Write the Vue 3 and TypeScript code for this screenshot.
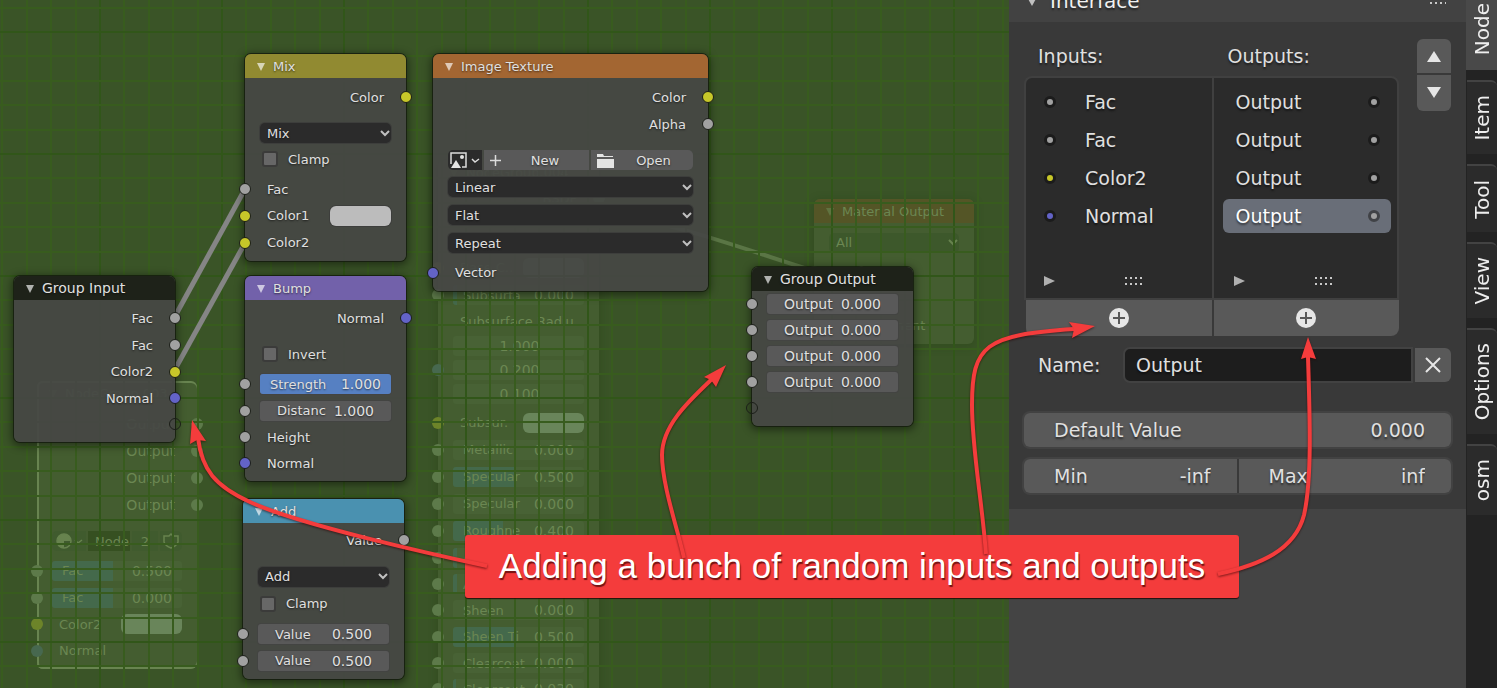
<script setup lang="ts">
import { ref } from 'vue'

type Kind = 'gap' | 'out' | 'in' | 'field' | 'select' | 'check' | 'swatch' | 'image' | 'group'

interface Row {
  kind: Kind
  h: number
  label?: string
  value?: string
  socket?: string
  fill?: number
  tight?: boolean
}

interface GraphNode {
  id: string
  title: string
  theme: string
  x: number
  y: number
  w: number
  rows: Row[]
}

const gap = (h: number): Row => ({ kind: 'gap', h })
const out = (label: string, socket: string, h: number): Row => ({ kind: 'out', label, socket, h })
const inp = (label: string, socket: string, h: number): Row => ({ kind: 'in', label, socket, h })
const pick = (label: string, h: number): Row => ({ kind: 'select', label, h })
const check = (label: string, h: number): Row => ({ kind: 'check', label, h })
const swatch = (label: string, h: number): Row => ({ kind: 'swatch', label, socket: 'yellow', h })
const field = (label: string, value: string, h: number, fill = 0, socket = 'gray', tight = false): Row =>
  ({ kind: 'field', label, value, h, fill, socket, tight })

const ghosts: GraphNode[] = [
  {
    id: 'ng', title: 'NodeGroup.003', theme: 'outlined', x: 37, y: 381, w: 160,
    rows: [
      gap(6), out('Output', 'gray', 26), out('Output', 'gray', 27), out('Output', 'gray', 27), out('Output', 'gray', 27),
      gap(10), { kind: 'group', h: 26 }, gap(3),
      field('Fac', '0.500', 27, 47, 'gray', true), field('Fac', '0.000', 27, 47, 'gray', true),
      swatch('Color2', 26), inp('Normal', 'blue', 27),
    ],
  },
  {
    id: 'bsdf', title: 'NodeGroup.004', theme: 'plain', x: 438, y: 160, w: 161,
    rows: [
      out('BSDF', 'green', 28), gap(42), swatch('Base C..', 27), field('Subsurfa', '0.000', 28, 3, 'gray', true),
      inp('Subsurface Radiu...', '', 25), field('', '1.000', 24, 0, ''), field('', '0.200', 24, 0, 'blue'),
      field('', '0.100', 24, 0, ''), gap(3), swatch('Subsur.', 27), field('Metallic', '0.000', 27, 0, 'gray', true),
      field('Specular', '0.500', 27, 47, 'gray', true), field('Specular', '0.000', 27, 0, 'gray', true),
      field('Roughne', '0.400', 27, 38, 'gray', true), field('Anisotro', '0.000', 27, 3, 'gray', true),
      field('Anisotro', '0.000', 26, 3, 'gray', true), field('Sheen', '0.000', 26, 0, 'gray', true),
      field('Sheen Ti', '0.500', 27, 47, 'gray', true), field('Clearcoat', '0.000', 26, 0, 'gray', true),
      field('Clearcoat', '0.030', 26, 2, 'gray', true), gap(20),
    ],
  },
  {
    id: 'mat', title: 'Material Output', theme: 'rust', x: 814, y: 199, w: 160,
    rows: [gap(6), pick('All', 27), gap(2), inp('Surface', 'green', 27), inp('Volume', 'green', 27), inp('Displacement', 'blue', 27)],
  },
]

const nodes: GraphNode[] = [
  {
    id: 'mix', title: 'Mix', theme: 'olive', x: 245, y: 54, w: 161,
    rows: [gap(4), out('Color', 'yellow', 30), gap(8), pick('Mix', 26), check('Clamp', 26), gap(4),
      inp('Fac', 'gray', 26), swatch('Color1', 27), inp('Color2', 'yellow', 27)],
  },
  {
    id: 'tex', title: 'Image Texture', theme: 'orange', x: 433, y: 54, w: 275,
    rows: [gap(4), out('Color', 'yellow', 30), out('Alpha', 'gray', 24), gap(11), { kind: 'image', h: 26 },
      pick('Linear', 28), pick('Flat', 28), pick('Repeat', 28), gap(2), inp('Vector', 'blue', 27)],
  },
  {
    id: 'gin', title: 'Group Input', theme: 'dark', x: 14, y: 276, w: 161,
    rows: [gap(4), out('Fac', 'gray', 28), out('Fac', 'gray', 26), out('Color2', 'yellow', 27), out('Normal', 'blue', 26), out('', 'empty', 26)],
  },
  {
    id: 'bump', title: 'Bump', theme: 'violet', x: 245, y: 276, w: 161,
    rows: [gap(4), out('Normal', 'blue', 28), gap(9), check('Invert', 26), gap(4),
      field('Strength', '1.000', 26, 100, 'gray', true), field('Distanc', '1.000', 27), inp('Height', 'gray', 26), inp('Normal', 'blue', 26)],
  },
  {
    id: 'add', title: 'Add', theme: 'cyan', x: 243, y: 499, w: 161,
    rows: [gap(4), out('Value', 'gray', 26), gap(10), pick('Add', 27), check('Clamp', 27), gap(4),
      field('Value', '0.500', 26), field('Value', '0.500', 27)],
  },
  {
    id: 'gout', title: 'Group Output', theme: 'dark', x: 752, y: 267, w: 161,
    rows: [field('Output', '0.000', 26), field('Output', '0.000', 26), field('Output', '0.000', 26), field('Output', '0.000', 26), inp('', 'empty', 26)],
  },
]

const layers = [
  { name: 'ghost', items: ghosts },
  { name: 'live', items: nodes },
]

const columns = Array.from({ length: 160 }, (_, i) => ({ p: Math.round(-22 + i * 24.4), major: i % 5 === 0 }))
const lines = Array.from({ length: 90 }, (_, i) => ({ p: Math.round(-90 + i * 24.4), major: i % 5 === 0 }))

const inputs = [
  { name: 'Fac', socket: 'gray' },
  { name: 'Fac', socket: 'gray' },
  { name: 'Color2', socket: 'yellow' },
  { name: 'Normal', socket: 'blue' },
]
const outputs = ['Output', 'Output', 'Output', 'Output']
const selected = ref(3)
const name = ref('Output')
const tabs = [
  { label: 'Node', h: 81 },
  { label: 'Item', h: 74 },
  { label: 'Tool', h: 68 },
  { label: 'View', h: 76 },
  { label: 'Options', h: 106 },
  { label: 'osm', h: 71 },
]
const arrows = [
  { line: 'M487 566C440 556 300 525 250 502C215 486 202 470 198 438', head: '192,420 190,444 197,440 206,441' },
  { line: 'M684 558C678 530 662 485 662 455C662 425 690 400 712 379', head: '726,365 704,377 711,380 716,387' },
  { line: 'M986 554C982 500 972 450 972 405C972 345 985 335 1074 329', head: '1095,326 1069,322 1074,329 1072,338' },
  { line: 'M1218 574C1260 565 1295 550 1304 515C1312 480 1310 420 1308 357', head: '1308,337 1301,359 1308,357 1316,359' },
]
</script>

<template>
  <div class="window">
    <main class="editor">
      <div v-for="layer in layers" :key="layer.name" class="layer" :class="layer.name">
        <svg v-if="layer.name === 'ghost'" class="wires">
          <path class="faint" d="M600 212C680 224 740 248 814 271" />
        </svg>
        <template v-else>
          <svg class="wires grid" shape-rendering="crispEdges">
            <line v-for="(c, i) in columns" :key="'c' + i" :x1="c.p" y1="0" :x2="c.p" y2="100%" :class="{ major: c.major }" />
            <line v-for="(l, i) in lines" :key="'l' + i" x1="0" :y1="l.p" x2="100%" :y2="l.p" :class="{ major: l.major }" />
          </svg>
          <svg class="wires">
            <path class="wire" d="M174 318L245 189" />
            <path class="wire" d="M174 371L245 243" />
          </svg>
        </template>

        <section
          v-for="n in layer.items"
          :key="n.id"
          class="node"
          :class="n.theme"
          :style="{ left: n.x + 'px', top: n.y + 'px', width: n.w + 'px' }"
        >
          <header class="node-head">
            <svg width="9" height="9" viewBox="0 0 9 9"><path d="M0 0H8L4 8Z" /></svg>
            <span>{{ n.title }}</span>
          </header>
          <div v-for="(r, i) in n.rows" :key="i" class="row" :class="'is-' + r.kind" :style="{ height: r.h + 'px' }">
            <i v-if="r.socket" class="socket" :class="r.socket"></i>
            <span v-if="r.kind === 'out' || r.kind === 'in'" :class="{ wide: r.label === 'Output' }">{{ r.label }}</span>

            <div v-else-if="r.kind === 'select'" class="pick">
              <select :aria-label="n.title + ' ' + r.label"><option>{{ r.label }}</option></select>
              <svg width="10" height="7" viewBox="0 0 10 7"><path d="M1 1L5 5L9 1" /></svg>
            </div>

            <label v-else-if="r.kind === 'check'"><input type="checkbox" />{{ r.label }}</label>

            <template v-else-if="r.kind === 'swatch'">
              <span>{{ r.label }}</span><button class="color" :aria-label="r.label"></button>
            </template>

            <label v-else-if="r.kind === 'field'" class="number" :class="{ tight: r.tight, sole: !r.label }">
              <i v-if="r.fill" class="fill" :style="{ width: r.fill + '%' }"></i>
              <span v-if="r.label" :class="{ wide: r.label === 'Output' }">{{ r.label }}</span>
              <input type="text" :value="r.value" :aria-label="r.label || n.title" />
            </label>

            <div v-else-if="r.kind === 'image'" class="bar">
              <button class="browse" aria-label="Browse image">
                <svg width="30" height="18" viewBox="0 0 30 18">
                  <path class="stroke" d="M12 16H16V2H1V13" />
                  <path class="solid" d="M1 17L6 9L11 17Z" /><circle class="solid" cx="12" cy="6" r="2" />
                  <path class="stroke" d="M22 8L25 11L29 8" />
                </svg>
              </button>
              <button>
                <svg width="11" height="11" viewBox="0 0 11 11"><path class="stroke" d="M5.5 0V11M0 5.5H11" /></svg><span>New</span>
              </button>
              <button>
                <svg width="17" height="15" viewBox="0 0 17 15"><path class="solid" d="M0 1H6L7 3H16V4H0ZM0 6H17V15H0Z" /></svg><span>Open</span>
              </button>
            </div>

            <div v-else-if="r.kind === 'group'" class="bar data">
              <button aria-label="Browse node groups">
                <svg width="30" height="18" viewBox="0 0 30 18">
                  <circle class="stroke" cx="10" cy="9" r="7" /><path class="solid" d="M10 2A7 7 0 0 0 10 16V9H17A7 7 0 0 0 10 2Z" />
                  <path class="stroke" d="M21 8L24 11L28 8" />
                </svg>
              </button>
              <input type="text" value="Node" aria-label="Group name" />
              <button>2</button>
              <button aria-label="Fake user">
                <svg width="16" height="16" viewBox="0 0 16 16"><path class="stroke" d="M8 1L10 3H15V9C14 12 11 14 8 15C5 14 2 12 1 9V3H6Z" /></svg>
              </button>
            </div>
          </div>
        </section>
      </div>
    </main>

    <aside class="sidebar">
      <section class="panel">
        <header class="panel-head">
          <svg width="10" height="9" viewBox="0 0 10 9"><path d="M0 0H10L5 9Z" /></svg>
          <h2>Interface</h2>
          <svg class="grip" width="16" height="6" viewBox="0 0 16 6"><path d="M0 1H16M0 5H16" /></svg>
        </header>
        <div class="panel-body">
          <div class="lists">
            <div class="list">
              <h3>Inputs:</h3>
              <div class="box">
                <ul>
                  <li v-for="(s, i) in inputs" :key="i">
                    <button><i class="dot" :class="s.socket"></i><span>{{ s.name }}</span></button>
                  </li>
                </ul>
                <div class="foot">
                  <svg width="11" height="10" viewBox="0 0 11 10"><path d="M0 0L11 5L0 10Z" /></svg>
                  <svg class="grip" width="19" height="8" viewBox="0 0 19 8"><path d="M0 1H19M0 7H19" /></svg>
                </div>
              </div>
              <button class="plus" aria-label="Add input">
                <svg width="20" height="20" viewBox="0 0 20 20"><circle cx="10" cy="10" r="10" /><path d="M10 4V16M4 10H16" /></svg>
              </button>
            </div>
            <div class="list right">
              <h3>Outputs:</h3>
              <div class="box">
                <ul>
                  <li v-for="(o, i) in outputs" :key="i">
                    <button :class="{ active: selected === i }" @click="selected = i"><span>{{ o }}</span><i class="dot gray"></i></button>
                  </li>
                </ul>
                <div class="foot">
                  <svg width="11" height="10" viewBox="0 0 11 10"><path d="M0 0L11 5L0 10Z" /></svg>
                  <svg class="grip" width="19" height="8" viewBox="0 0 19 8"><path d="M0 1H19M0 7H19" /></svg>
                </div>
              </div>
              <button class="plus" aria-label="Add output">
                <svg width="20" height="20" viewBox="0 0 20 20"><circle cx="10" cy="10" r="10" /><path d="M10 4V16M4 10H16" /></svg>
              </button>
            </div>
            <div class="move">
              <button aria-label="Move up"><svg width="16" height="12" viewBox="0 0 16 12"><path d="M8 1L15 12H1Z" /></svg></button>
              <button aria-label="Move down"><svg width="16" height="12" viewBox="0 0 16 12"><path d="M1 0H15L8 11Z" /></svg></button>
            </div>
          </div>

          <div class="name">
            <label for="socket-name">Name:</label>
            <input id="socket-name" v-model="name" type="text" />
            <button aria-label="Remove"><svg width="16" height="16" viewBox="0 0 16 16"><path d="M1 1L15 15M15 1L1 15" /></svg></button>
          </div>
          <div class="numbers">
            <label>Default Value<input type="text" value="0.000" /></label>
          </div>
          <div class="numbers">
            <label>Min<input type="text" value="-inf" /></label>
            <label>Max<input type="text" value="inf" /></label>
          </div>
        </div>
      </section>
      <nav class="tabs">
        <button v-for="(t, i) in tabs" :key="t.label" :class="{ current: i === 0 }" :style="{ height: t.h + 'px' }">
          <span>{{ t.label }}</span>
        </button>
      </nav>
    </aside>

    <p class="callout">Adding a bunch of random inputs and outputs</p>
    <svg class="arrows">
      <g v-for="(a, i) in arrows" :key="i">
        <path :d="a.line" /><polygon :points="a.head" />
      </g>
    </svg>
  </div>
</template>

<style>
body { margin: 0; background: #3a5427; }
</style>

<style scoped>
* { box-sizing: border-box; }
.window {
  position: relative; display: flex; height: 100vh; overflow: hidden;
  font-family: "DejaVu Sans", sans-serif; font-size: 13px; color: #e0e0e0;
}
button, input, select { font: inherit; color: inherit; border: 0; margin: 0; padding: 0; background: none; min-width: 0; text-shadow: inherit; }
button { display: flex; align-items: center; justify-content: center; }
h2, h3, ul, p { margin: 0; padding: 0; font-weight: 400; list-style: none; }

.editor { position: relative; flex: 1; min-width: 0; overflow: hidden; background: #3a5427; }
.layer { position: absolute; inset: 0; }
.wires { position: absolute; inset: 0; width: 100%; height: 100%; fill: none; }
.grid line { stroke: #385c1e; stroke-width: 2; }
.grid line.major { stroke: #315619; }
.wire { stroke: #858585; stroke-width: 5; }
.faint { stroke: #5a7545; stroke-width: 4; }

.node {
  position: absolute; padding-bottom: 5px; border-radius: 6px; background: rgba(70, 71, 69, 0.93);
  box-shadow: 0 0 0 1px rgba(20, 28, 14, 0.8), 0 2px 8px 2px rgba(0, 0, 0, 0.45); text-shadow: 0 1px 2px rgba(0, 0, 0, 0.6);
}
.node-head { display: flex; align-items: center; gap: 7px; height: 24px; padding-left: 12px; border-radius: 6px 6px 0 0; white-space: nowrap; }
.node-head svg { fill: #ffffff; opacity: 0.65; margin-top: 3px; }
.olive .node-head { background: #918a31; }
.orange .node-head { background: #a36632; }
.violet .node-head { background: #7261aa; }
.cyan .node-head { background: #4a91b0; }
.dark .node-head { background: #1e2219; font-size: 14px; }
.row { position: relative; display: flex; align-items: center; padding: 0 15px; white-space: nowrap; }
.is-out { justify-content: flex-end; padding-right: 22px; }
.is-in, .is-swatch { padding-left: 22px; }
.is-swatch { justify-content: space-between; }
.wide { font-size: 14px; }
.socket { position: absolute; left: -6px; top: calc(50% - 6px); width: 12px; height: 12px; border: 1px solid #1b1e18; border-radius: 50%; }
.is-out .socket { left: auto; right: -6px; }
.gray { background: #a1a1a1; }
.yellow { background: #c7c729; }
.blue { background: #6363c7; }
.green { background: #63c763; }
.pick { display: grid; flex: 1; align-items: center; }
.pick select { grid-area: 1 / 1; appearance: none; height: 20px; padding: 0 7px; border-radius: 5px; background: #2b2b2b; box-shadow: 0 0 0 1px #3d3e3c; }
.pick svg { grid-area: 1 / 1; justify-self: end; margin-right: 1px; fill: none; stroke: #c0c0c0; stroke-width: 2; pointer-events: none; }
.is-check label { display: flex; align-items: center; gap: 10px; margin-left: 2px; }
.is-check input { appearance: none; width: 16px; height: 16px; border: 2px solid #3b3b3a; border-radius: 3px; background: #676767; }
.color { width: 61px; height: 20px; border-radius: 6px; background: #bcbcbc; box-shadow: 0 0 0 1px #3d3e3c; }
.number {
  position: relative; display: flex; flex: 1; align-items: center; justify-content: space-between; min-width: 0; height: 20px;
  padding: 0 17px; border-radius: 3px; background: #595959; box-shadow: 0 0 0 1px #434442; overflow: hidden;
}
.number.tight { padding: 0 10px; }
.number.sole { justify-content: center; }
.number span, .number input { position: relative; }
.number input { width: 42px; font-size: 14px; text-align: right; }
.fill { position: absolute; left: 0; top: 0; bottom: 0; background: #5680c2; }
.bar { display: grid; grid-template-columns: 34px 105px 1fr; gap: 2px; flex: 1; height: 20px; border-radius: 5px; overflow: hidden; }
.bar button { background: #595959; }
.bar .browse { background: #2b2b2b; }
.bar button:not(.browse) { justify-content: flex-start; padding-left: 6px; }
.bar button:not(.browse) span { flex: 1; text-align: center; }
.stroke { fill: none; stroke: #dcdcdc; stroke-width: 1.5; }
.solid { fill: #e4e4e4; }

.ghost .node { background: rgba(100, 125, 80, 0.24); box-shadow: 0 2px 8px 2px rgba(20, 50, 0, 0.18); color: #6b8752; text-shadow: none; }
.ghost .outlined { box-shadow: inset 2px 0 #688450, inset 0 2px #688450, inset 0 -2px #688450; }
.ghost .node-head svg { fill: #67834e; }
.ghost .rust .node-head { background: #545526; }
.ghost .socket { border: 0; background: #5d7a4a; }
.ghost .socket.yellow { background: #6d8429; }
.ghost .socket.blue { background: #47684f; }
.ghost .number { background: #486235; box-shadow: none; }
.ghost .color { background: #69855a; box-shadow: none; }
.ghost .fill { background: #44694b; }
.ghost .pick select { background: #3d582b; box-shadow: none; }
.ghost .pick svg { stroke: #67834e; }
.ghost .stroke { stroke: #67834e; }
.ghost .solid { fill: #67834e; }
.ghost .bar.data { grid-template-columns: 34px 1fr 26px 22px; }
.ghost .bar.data > * { background: #405b2e; justify-content: center; padding: 0; }
.ghost .bar.data input { padding-left: 7px; background: #365021; }

.sidebar { display: flex; width: 488px; background: #444444; font-size: 19px; text-shadow: 0 2px 2px rgba(0, 0, 0, 0.5); }
.panel { flex: 1; min-width: 0; }
.panel-head { display: flex; align-items: center; height: 42px; margin-top: -20px; padding: 0 20px 0 18px; background: #424242; }
.panel-head h2 { flex: 1; margin-left: 13px; font-size: 20px; color: #f0f0f0; }
.panel-head svg { fill: #c0c0c0; }
.grip path { fill: none; stroke: #c8c8c8; stroke-width: 2; stroke-dasharray: 2 3; }
.panel-body { display: flex; flex-direction: column; padding: 17px 15px 16px; background: #393939; }
.lists { display: flex; }
.list { flex: 1; min-width: 0; }
.list h3 { height: 37px; padding-left: 14px; font-size: 19px; line-height: 34px; }
.list.right h3 { padding-left: 16px; }
.box { padding: 5px 6px 0 0; height: 224px; background: #2b2b2b; border: 2px solid #404040; border-width: 2px 0 2px 2px; border-radius: 8px 0 0 0; }
.right .box { padding-left: 9px; border-right-width: 2px; border-radius: 0 8px 0 0; }
.box li { display: flex; align-items: center; height: 38px; }
.box li button { flex: 1; height: 34px; justify-content: flex-start; gap: 29px; padding-left: 18px; border-radius: 6px; }
.right .box li button { justify-content: space-between; padding: 0 11px 0 13px; }
.box li button.active { background: #696e78; color: #ffffff; }
.dot { width: 12px; height: 12px; border: 3px solid #1b1b1b; border-radius: 50%; }
.active .dot { border-color: #404246; }
.foot { display: flex; align-items: center; gap: 70px; height: 60px; padding: 32px 0 0 18px; }
.right .foot { padding-left: 11px; }
.foot svg { fill: #b0b0b0; }
.plus { width: 100%; height: 36px; background: #595959; border: 0 solid #393939; border-left-width: 2px; border-radius: 0 0 0 8px; }
.right .plus { border-radius: 0 0 8px 0; }
.plus svg { fill: #e6e6e6; stroke: none; }
.plus path { stroke: #595959; stroke-width: 2; }
.move { display: flex; flex-direction: column; gap: 2px; margin-left: 18px; }
.move button { width: 34px; height: 34px; background: #595959; border-radius: 6px 6px 0 0; }
.move button + button { height: 36px; border-radius: 0 0 6px 6px; }
.move svg { fill: #e6e6e6; }
.name { display: grid; grid-template-columns: 84px 1fr 36px; gap: 0 2px; align-items: center; height: 34px; margin: 11px 0 32px 14px; }
.name input { height: 36px; padding-left: 11px; margin-left: -1px; background: #1d1d1d; border: 2px solid #424242; border-radius: 7px 0 0 7px; }
.name button { height: 34px; background: #595959; border-radius: 0 6px 6px 0; }
.name svg { stroke: #e6e6e6; stroke-width: 2; }
.numbers { display: flex; gap: 2px; height: 34px; margin-bottom: 12px; border-radius: 6px; overflow: hidden; box-shadow: 0 0 0 2px #424242; }
.numbers:last-child { margin-bottom: 0; }
.numbers label { display: flex; flex: 1; align-items: center; min-width: 0; padding: 0 26px 0 30px; background: #595959; white-space: nowrap; }
.numbers input { flex: 1; width: 0; text-align: right; }

.tabs { display: flex; flex-direction: column; gap: 10px; width: 31px; padding-left: 1px; background: #232323; }
.tabs button { flex: none; background: #2b2b2b; border-top: 2px solid #434343; border-radius: 0 6px 0 0; }
.tabs button.current { margin-top: -11px; margin-left: -1px; background: #494949; border: 0; border-radius: 0; }
.tabs span { writing-mode: vertical-rl; transform: rotate(180deg); font-size: 20px; line-height: 26px; text-shadow: none; color: #eeeeee; }

.callout {
  position: absolute; left: 465px; top: 535px; width: 774px; padding: 11px 0 12px; text-align: center; color: #ffffff; background: #f43c3c;
  border-radius: 3px; box-shadow: 0 1px 1px rgba(30, 0, 0, 0.8); font-family: "Liberation Sans", Arial, sans-serif; font-size: 35px; line-height: 40px;
  text-shadow: 1px 2px 1px rgba(60, 0, 0, 0.7); white-space: nowrap;
}
.arrows { position: absolute; inset: 0; width: 100%; height: 100%; pointer-events: none; filter: drop-shadow(0 1px 1px rgba(40, 0, 0, 0.6)); }
.arrows path { fill: none; stroke: #f43c3c; stroke-width: 4; }
.arrows polygon { fill: #f43c3c; }
</style>
